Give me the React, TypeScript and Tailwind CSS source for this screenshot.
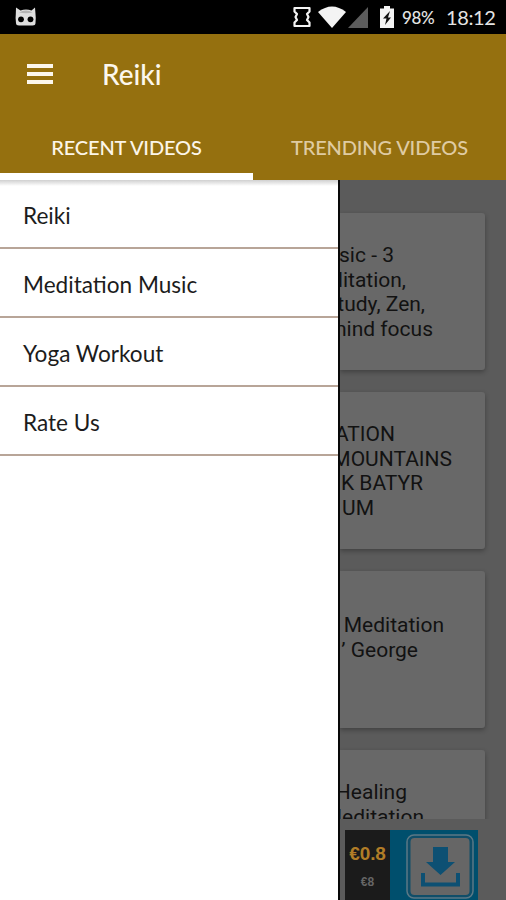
import type { ReactNode } from "react";

type Line = { text: string; end: number };

const menu = ["Reiki", "Meditation Music", "Yoga Workout", "Rate Us"];

// `end` is where each title line stops, measured from the drawer's edge.
const videos: Line[][] = [
  [
    { text: "sic - 3", end: 54 },
    { text: "ditation,", end: 66 },
    { text: "tudy, Zen,", end: 85 },
    { text: "mind focus", end: 93 },
  ],
  [
    { text: "ATION", end: 55 },
    { text: "MOUNTAINS", end: 112 },
    { text: "K BATYR", end: 83 },
    { text: "UM", end: 34 },
  ],
  [
    { text: "Meditation", end: 104 },
    { text: "’ George", end: 78 },
    { text: "", end: 0 },
  ],
  [
    { text: "Healing", end: 67 },
    { text: "Meditation", end: 84 },
    { text: "", end: 0 },
    { text: "", end: 0 },
  ],
];

function StatusBar() {
  return (
    <div className="flex h-[34px] shrink-0 items-center bg-black pl-[15px] pr-[11px] text-[#e4e4e4]">
      <svg width="22" height="20" viewBox="0 0 22 20">
        <path d="M1 0.500 5.500 3.500Q11 1.500 16.500 3.500L20 0.500 20.500 7Q21 10 20.500 16 20.500 18.500 17.500 18.500H4Q1 18.500 1 16 .3 10 .8 7Z" fill="#dedede" />
        <path d="M4 5.500Q11 1.500 17.500 5.500Q11 7 4 5.500Z" fill="#b4b4b4" />
        <circle cx="6" cy="12.300" r="2.900" fill="#000" />
        <circle cx="15.500" cy="12.300" r="2.900" fill="#000" />
      </svg>
      <svg className="ml-auto" width="18" height="22" viewBox="0 0 18 22" fill="none">
        <path
          d="M1.500 2H16.500V5.500L14 8 15.500 11 14 14 16.500 16.500V20H1.500V16.500L4 14 2.500 11 4 8 1.500 5.500Z"
          stroke="#f4f4f4"
          strokeWidth="2.200"
          strokeLinejoin="round"
        />
      </svg>
      <svg className="ml-[7px]" width="28" height="22" viewBox="0 0 28 22">
        <path d="M0 6Q14-5 28 6L14 22Z" fill="#f4f4f4" />
      </svg>
      <svg className="ml-[2px]" width="20" height="21" viewBox="0 0 20 21">
        <path d="M20 0V21H0Z" fill="#5c5c5c" />
      </svg>
      <svg className="ml-[12px]" width="14" height="22" viewBox="0 0 14 22">
        <path d="M4 0h6v2.500h4V22H0V2.500h4Z" fill="#f4f4f4" />
        <path d="M10 5 3 12.500h3.500L5 19l6-7.500H8Z" fill="#111" />
      </svg>
      <span className="ml-[8px] w-[33px] whitespace-nowrap pt-px text-[17px] font-medium tracking-[-0.300px]">98%</span>
      <span className="ml-[11px] w-[49px] whitespace-nowrap text-[20px] tracking-[-0.400px]">18:12</span>
    </div>
  );
}

function Tab({ active, children }: { active?: boolean; children: ReactNode }) {
  return (
    <div
      className={`flex flex-1 items-center justify-center border-b-[7px] pt-[7px] text-[20px] font-medium tracking-[-0.150px] ${
        active ? "border-white text-[#fcf5e8]" : "border-transparent text-[#dfcba2]"
      }`}
    >
      {children}
    </div>
  );
}

function VideoCard({ lines }: { lines: Line[] }) {
  return (
    <div className="mr-[21px] flex h-[157px] shrink-0 flex-col justify-center rounded-r-[3px] bg-[#686868] pt-[2px] shadow-[0_2px_5px_rgba(0,0,0,0.3)]">
      {lines.map((line, i) => (
        <div key={i} className="flex h-[24.500px] items-center justify-end whitespace-nowrap" style={{ width: line.end }}>
          {line.text}
        </div>
      ))}
    </div>
  );
}

function AdBanner() {
  return (
    <div className="flex h-[70px] shrink-0 bg-[#5b5b5b] pl-[5px]">
      <div className="flex w-[45px] flex-col items-center bg-[#1b1b1b] pt-[12px] font-['Liberation_Sans',sans-serif] font-bold">
        <span className="text-[19px] leading-[24px] tracking-[-0.100px] text-[#b17d27]">€0.8</span>
        <span className="mt-[8px] text-[12px] leading-[16px] text-[#666]">€8</span>
      </div>
      <div className="flex w-[88px] justify-end bg-[#004f6d] pr-[3px] pt-[4px]">
        <svg width="69" height="66" viewBox="0 0 69 66">
          <rect x="1" y="1" width="66" height="63" rx="7" fill="#104e69" stroke="#5b7885" strokeWidth="1.500" />
          <rect x="4.500" y="4" width="59" height="57" rx="4" fill="#666" />
          <path d="M27 13H42V28H49L34.500 41 20 28H27Z" fill="#0d5073" />
          <path d="M17 39V50.500H52V39" fill="none" stroke="#0d5073" strokeWidth="4" />
        </svg>
      </div>
    </div>
  );
}

export default function App() {
  return (
    <div className="flex h-[900px] w-[506px] flex-col overflow-hidden bg-[#5b5b5b] font-['Lato',sans-serif]">
      <StatusBar />
      <header className="flex h-[146px] shrink-0 flex-col bg-[#95700f]">
        <div className="flex h-[79px] items-center pl-[27px] text-[28px] font-medium text-[#fcf7ed]">
          <div className="flex w-[75px] flex-col gap-[4px]">
            <span className="h-[4px] w-[26px] bg-current" />
            <span className="h-[4px] w-[26px] bg-current" />
            <span className="h-[4px] w-[26px] bg-current" />
          </div>
          <span>Reiki</span>
        </div>
        <div className="flex h-[67px]">
          <Tab active>RECENT VIDEOS</Tab>
          <Tab>TRENDING VIDEOS</Tab>
        </div>
      </header>
      <div className="flex min-h-0 flex-1">
        <nav className="w-[340px] shrink-0 border-r-2 border-[#080808] bg-white bg-linear-to-b from-[#d0d0d0] to-white to-[6px] text-[22.600px] text-[#1c1c1c]">
          {menu.map((item) => (
            <div key={item} className="flex h-[69px] items-center border-b-2 border-[#b8a598] pl-[23px] pt-[5px]">
              {item}
            </div>
          ))}
        </nav>
        <main className="flex min-w-0 flex-1 flex-col overflow-hidden font-['Roboto',sans-serif] text-[21px] text-[#121212]">
          <div className="flex h-[639px] shrink-0 flex-col gap-[22px] overflow-hidden pt-[33px]">
            {videos.map((lines, i) => (
              <VideoCard key={i} lines={lines} />
            ))}
          </div>
          <div className="h-[11px] shrink-0" />
          <AdBanner />
        </main>
      </div>
    </div>
  );
}
